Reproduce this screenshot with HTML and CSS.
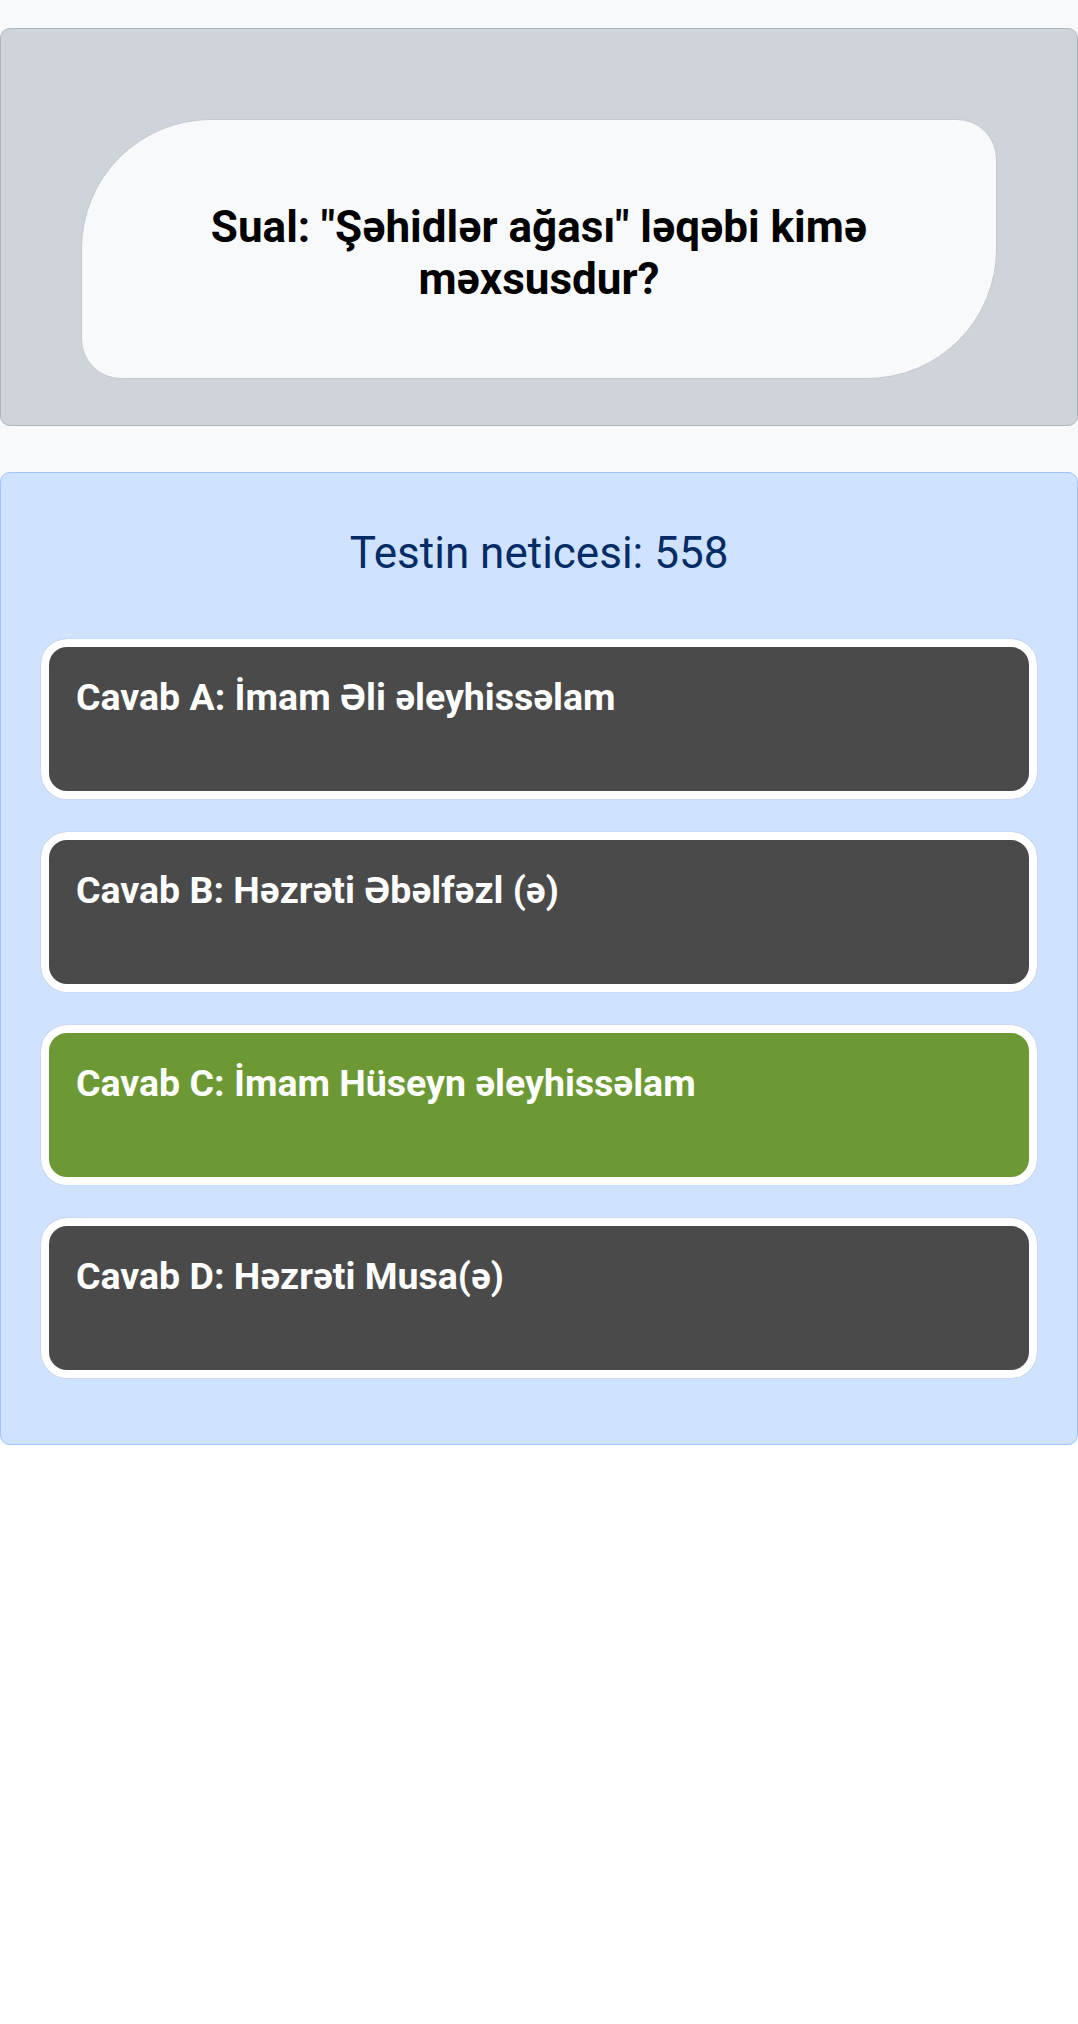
FILE: index.html
```html
<!DOCTYPE html>
<html lang="az">
<head>
  <meta charset="UTF-8">
  <meta name="viewport" content="width=device-width, initial-scale=1.0">
  <title>Test</title>
  <link rel="stylesheet" href="styles.css">
</head>
<body>
  <div class="quiz-page">
    <div class="question-container">
      <div class="question-card">
        <h2 id="question-text">Sual: "Şəhidlər ağası" ləqəbi kimə məxsusdur?</h2>
      </div>
    </div>

    <div class="answers-container">
      <h3 class="test-result">Testin neticesi: <span id="score">558</span></h3>
      <div class="answer-btn">Cavab A: İmam Əli əleyhissəlam</div>
      <div class="answer-btn">Cavab B: Həzrəti Əbəlfəzl (ə)</div>
      <div class="answer-btn correct">Cavab C: İmam Hüseyn əleyhissəlam</div>
      <div class="answer-btn">Cavab D: Həzrəti Musa(ə)</div>
    </div>
  </div>
</body>
</html>
```

FILE: styles.css
```css
body {
  font-family: Roboto, "Liberation Sans", Arial, sans-serif;
  margin: 0;
  padding: 0;
  background-color: #ffffff;
}

.quiz-page {
  background-color: #f8f9fa;
  padding-top: 28px;
}

.question-container {
  background-color: #ced4da;
  border: 1px solid #adb5bd;
  border-radius: 10px;
  padding: 90px 80px 46px;
}

.question-card {
  background-color: #f8f9fa;
  border: 1px solid #c6c9cc;
  border-radius: 130px 40px;
  height: 260px;
  box-sizing: border-box;
  display: flex;
  align-items: center;
  justify-content: center;
  padding: 8px 100px 0;
}

.question-card h2 {
  margin: 0;
  font-size: 44px;
  font-weight: 700;
  color: #000;
  text-align: center;
}

.answers-container {
  margin-top: 46px;
  background-color: #cfe2ff;
  border: 1px solid #9ec5fe;
  border-radius: 10px;
  padding: 54px 40px 33px;
}

.test-result {
  margin: 0 0 60px;
  font-size: 44px;
  font-weight: 400;
  color: #052c65;
  text-align: center;
}

.answer-btn {
  height: 160px;
  box-sizing: border-box;
  margin: 0 0 33px;
  padding: 28px 27px;
  background-color: #4a4a4a;
  border: 8px solid #ffffff;
  border-radius: 26px;
  box-shadow: 0 0 1px rgba(0, 0, 0, 0.35);
  color: #ffffff;
  font-size: 37.5px;
  font-weight: 700;
  cursor: pointer;
}

.answer-btn.correct {
  background-color: #6c9934;
}
```
